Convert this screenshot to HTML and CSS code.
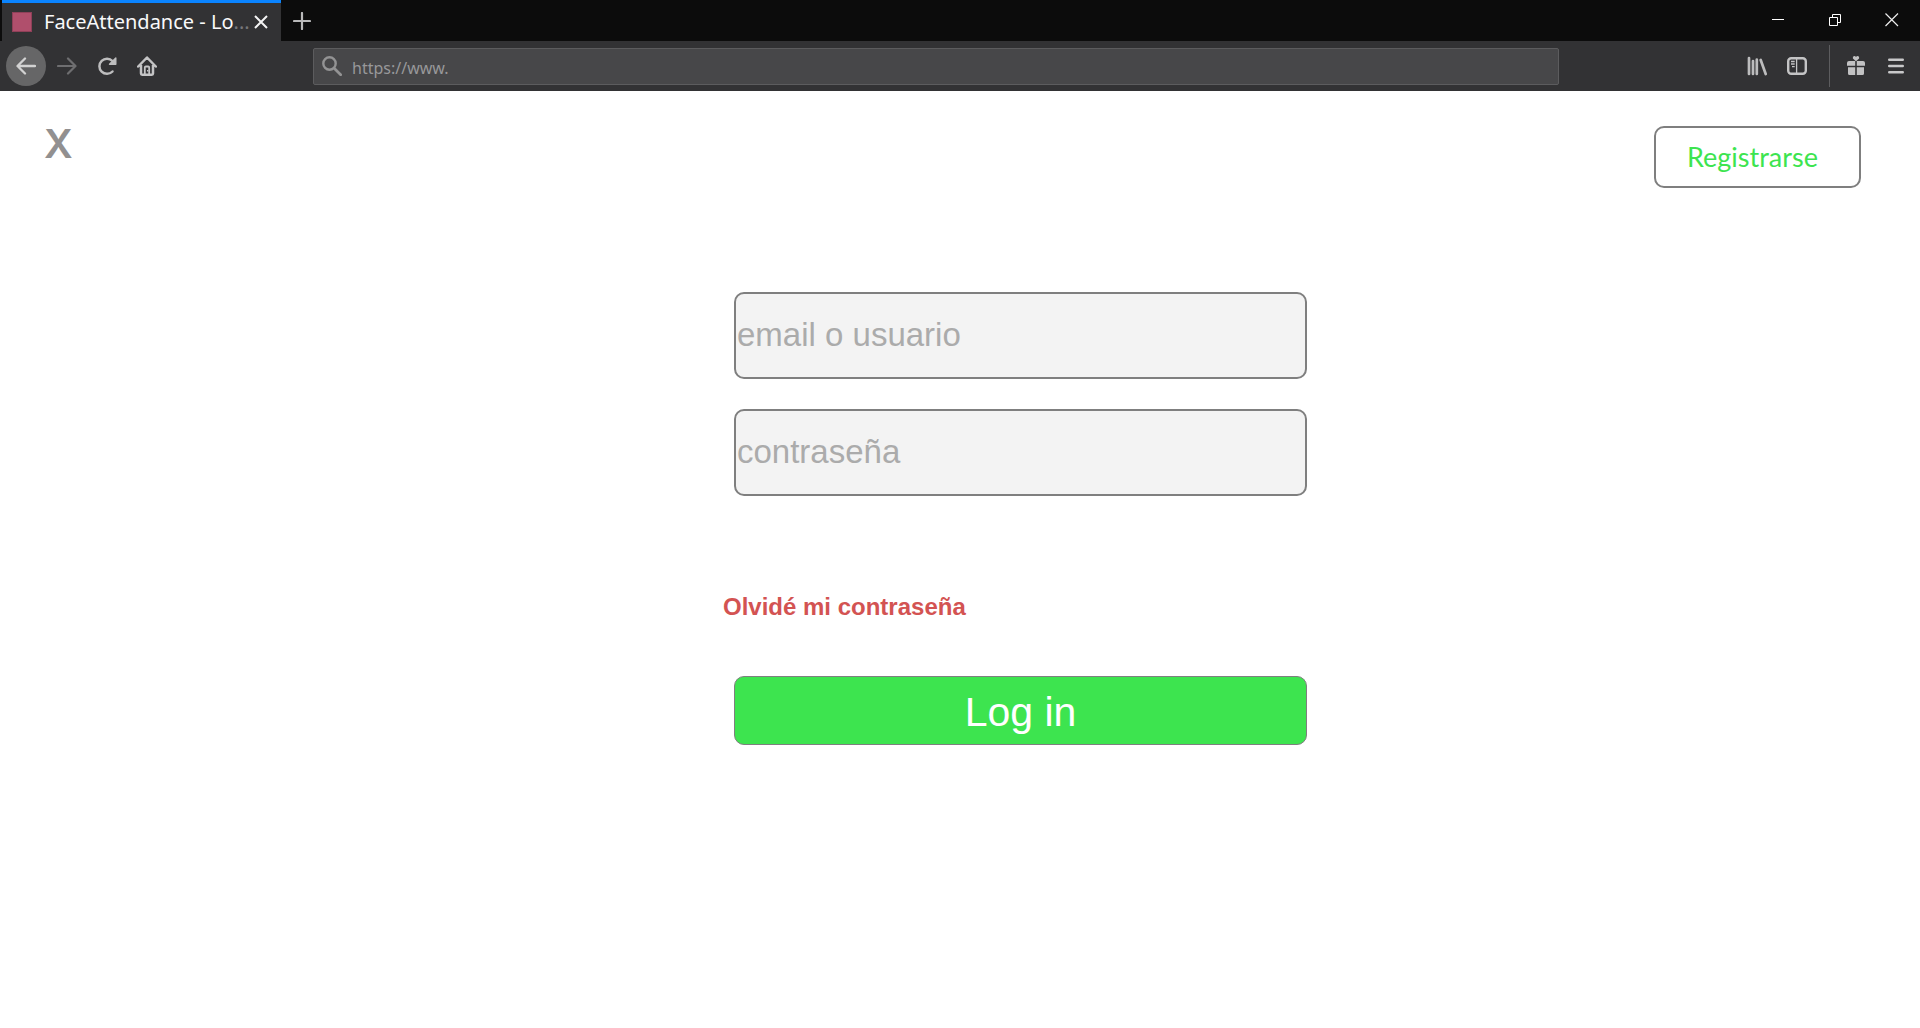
FILE: index.html
```html
<!DOCTYPE html>
<html lang="es">
<head>
<meta charset="utf-8">
<meta name="viewport" content="width=device-width, initial-scale=1">
<title>FaceAttendance - Log in</title>
<link rel="stylesheet" href="styles.css">
</head>
<body>
<header class="browser">
  <div class="tab-bar">
    <div class="tab">
      <span class="favicon"></span>
      <span class="tab-title">FaceAttendance - Lo<span class="fade">...</span></span>
      <button class="icon-btn" aria-label="Cerrar pestaña">
        <svg width="14" height="14" viewBox="0 0 14 14"><path d="M1 1l12 12M13 1L1 13" stroke="#f4f4f4" stroke-width="2" fill="none"/></svg>
      </button>
    </div>
    <button class="icon-btn new-tab" aria-label="Nueva pestaña">
      <svg width="18" height="18" viewBox="0 0 18 18"><path d="M9 1v16M1 9h16" stroke="#b9b9ba" stroke-width="2.2" stroke-linecap="round" fill="none"/></svg>
    </button>
    <div class="window-controls">
      <button class="icon-btn" aria-label="Minimizar"><svg width="14" height="14" viewBox="0 0 14 14"><path d="M1 6.5h12" stroke="#fff" fill="none"/></svg></button>
      <button class="icon-btn" aria-label="Restaurar"><svg width="14" height="14" viewBox="0 0 14 14"><path d="M1.500 4.500h8v8h-8zM4.500 4.500v-3h8v8h-3" stroke="#fff" fill="none"/></svg></button>
      <button class="icon-btn" aria-label="Cerrar"><svg width="14" height="14" viewBox="0 0 14 14"><path d="M.5 .5l12.500 12.500M13 .5L.5 13" stroke="#eee" stroke-width="1.200" fill="none"/></svg></button>
    </div>
  </div>
  <div class="toolbar">
    <nav class="nav-buttons">
      <button class="icon-btn back" aria-label="Atrás"><svg width="20" height="18" viewBox="0 0 20 18"><path d="M19 9H2M9 1.500L1.500 9 9 16.500" stroke="#d2d2d2" stroke-width="2.300" stroke-linecap="round" stroke-linejoin="round" fill="none"/></svg></button>
      <button class="icon-btn forward" aria-label="Adelante"><svg width="20" height="18" viewBox="0 0 20 18"><path d="M1 9h17M11 1.500L18.500 9 11 16.500" stroke="#6e6e70" stroke-width="2.200" stroke-linecap="round" stroke-linejoin="round" fill="none"/></svg></button>
      <button class="icon-btn" aria-label="Recargar"><svg width="20" height="20" viewBox="0 0 20 20"><path d="M15.500 15.500A7.600 7.600 0 1 1 15.500 5" stroke="#bdbdbe" stroke-width="2.500" stroke-linecap="round" fill="none"/><path d="M18.800 2v6.300h-6.300z" fill="#bdbdbe" stroke="#bdbdbe" stroke-width="1.400" stroke-linejoin="round"/></svg></button>
      <button class="icon-btn" aria-label="Inicio"><svg width="20" height="20" viewBox="0 0 20 20"><path d="M1.200 10.500L10 1.500l8.800 9M4 9v8.500q0 1.200 1.200 1.200h9.600q1.200 0 1.200-1.200V9" stroke="#c4c4c5" stroke-width="2.500" stroke-linecap="round" stroke-linejoin="round" fill="none"/><path d="M7.800 18.500V11.500q0-1 1-1h2.400q1 0 1 1v7" fill="none" stroke="#c4c4c5" stroke-width="1.800"/><path d="M10 14h1.400v1.600H10z" fill="#c4c4c5"/></svg></button>
    </nav>
    <label class="url-box">
      <svg width="20" height="20" viewBox="0 0 20 20"><circle cx="7.500" cy="7.500" r="6.200" stroke="#939394" stroke-width="2.400" fill="none"/><path d="M12.200 12.200l6.500 6.500" stroke="#939394" stroke-width="2.700" stroke-linecap="round"/></svg>
      <input class="url-input" type="text" value="https://www." aria-label="Dirección">
    </label>
    <div class="tools">
      <button class="icon-btn" aria-label="Biblioteca"><svg width="20" height="20" viewBox="0 0 20 20"><path d="M2 2v16M6 5v13M9.800 3.500V18M13.700 4l5 14" stroke="#bcbcbd" stroke-width="2.700" stroke-linecap="round" fill="none"/></svg></button>
      <button class="icon-btn" aria-label="Barra lateral"><svg width="20" height="20" viewBox="0 0 20 20"><rect x="1.200" y="2.200" width="17.600" height="15.600" rx="3" stroke="#c4c4c5" stroke-width="2.400" fill="none"/><path d="M9.600 2v16" stroke="#c4c4c5" stroke-width="1.300"/><path d="M4 5.500h3.700M4 8h3.700M5 10.700h2.700" stroke="#c4c4c5" stroke-width="1.300"/></svg></button>
      <span class="separator"></span>
      <button class="icon-btn" aria-label="Novedades"><svg width="20" height="20" viewBox="0 0 20 20"><path d="M3 5h6.200v4.700H1V7q0-2 2-2zM10.800 5H17q2 0 2 2v2.700h-8.200zM2 11.200h7.200V19H3.500Q2 19 2 17.500zM10.800 11.200H18v6.300q0 1.500-1.500 1.500h-5.700z" fill="#c2c2c3"/><path d="M10 5.200L6.900 2.400Q6.300.2 8.300 0 9.500 0 10 1.100 10.500 0 11.700 0 13.700.2 13.100 2.400z" fill="#c2c2c3"/></svg></button>
      <button class="icon-btn menu" aria-label="Menú"><svg width="16" height="16" viewBox="0 0 16 16"><path d="M1.200 1.800h13.600M1.200 8h13.600M1.200 14.200h13.600" stroke="#c8c8c9" stroke-width="2.400" stroke-linecap="round"/></svg></button>
    </div>
  </div>
</header>
<main>
  <div class="top-row">
    <button class="close-page">X</button>
    <button class="register">Registrarse</button>
  </div>
  <form class="login">
    <input class="field" type="text" placeholder="email o usuario" aria-label="email o usuario">
    <input class="field" type="password" placeholder="contraseña" aria-label="contraseña">
    <a class="forgot" href="#">Olvidé mi contraseña</a>
    <button class="submit" type="button">Log in</button>
  </form>
</main>
</body>
</html>
```
FILE: styles.css
```css
* {
  box-sizing: border-box;
}

body {
  margin: 0;
  background: #fff;
  font-family: "Liberation Sans", Arial, sans-serif;
}

button {
  font-family: inherit;
  cursor: pointer;
}

svg {
  display: block;
  flex: none;
}

.icon-btn {
  display: flex;
  align-items: center;
  justify-content: center;
  padding: 0;
  border: 0;
  background: none;
}

/* Browser chrome */
.tab-bar {
  display: flex;
  align-items: stretch;
  height: 41px;
  padding-left: 2px;
  background: #0c0c0c;
}

.tab {
  display: flex;
  align-items: center;
  width: 279px;
  padding: 0 13px 0 10px;
  border-top: 3px solid #0a84ff;
  background: #323234;
}

.favicon {
  width: 20px;
  height: 20px;
  margin-right: 12px;
  border: 1px solid #8f4058;
  background: #b04f6c;
}

.tab-title {
  flex: 1;
  min-width: 0;
  color: #f9f9fa;
  font: 20px/28px "Noto Sans", sans-serif;
  white-space: nowrap;
}

.fade {
  color: #77777a;
}

.new-tab {
  width: 42px;
}

.window-controls {
  display: flex;
  gap: 43px;
  margin-left: auto;
  padding: 0 21px 1px 0;
}

.toolbar {
  display: flex;
  align-items: center;
  height: 50px;
  background: #323234;
}

.nav-buttons {
  display: flex;
  align-items: center;
  gap: 20px;
  width: 313px;
  padding-left: 6px;
}

.back {
  width: 40px;
  height: 40px;
  margin-right: -9px;
  border-radius: 50%;
  background: #666667;
}

.url-box {
  display: flex;
  flex: 1;
  align-items: center;
  gap: 10px;
  height: 37px;
  padding: 0 8px;
  border: 1px solid #5c5c5e;
  border-radius: 2px;
  background: #474749;
}

.url-input {
  flex: 1;
  min-width: 0;
  padding: 4px 0 0;
  border: 0;
  outline: 0;
  background: none;
  color: #98989a;
  font: 16px/24px "Noto Sans", sans-serif;
}

.tools {
  display: flex;
  align-items: center;
  justify-content: flex-end;
  gap: 20px;
  width: 361px;
  padding-right: 16px;
}

.separator {
  width: 1px;
  height: 42px;
  margin: 0 -4px 0 2px;
  background: #5d5d5f;
}

.menu {
  margin-left: 2px;
}

/* Login page */
.top-row {
  display: flex;
  align-items: flex-start;
  justify-content: space-between;
  padding: 35px 59px 0 44px;
}

.close-page {
  padding: 0;
  border: 0;
  background: none;
  color: #929090;
  font: 600 40px/36px Inter, sans-serif;
}

.register {
  width: 207px;
  height: 62px;
  padding: 0 10px 0 0;
  border: 2px solid #7f7f7f;
  border-radius: 10px;
  background: #fff;
  color: #3de44f;
  font: 27px/32px Lato, sans-serif;
}

.login {
  display: flex;
  flex-direction: column;
  width: 573px;
  margin: 104px 0 0 calc(50% - 226px);
}

.field {
  height: 87px;
  margin-bottom: 30px;
  padding: 0 1px 2px;
  border: 2px solid #7f7f7f;
  border-radius: 10px;
  background: #f3f3f3;
  color: #555;
  font: 33px/40px "Liberation Sans", Arial, sans-serif;
}

.field::placeholder {
  color: #ababab;
  opacity: 1;
}

.forgot {
  align-self: flex-start;
  margin: 67px 0 55px -11px;
  color: #d35352;
  font-size: 24px;
  font-weight: bold;
  line-height: 28px;
  text-decoration: none;
}

.submit {
  height: 69px;
  padding: 2px 0 0;
  border: 1px solid #7f7f7f;
  border-radius: 10px;
  background: #3de44f;
  color: #fff;
  font-size: 41px;
  line-height: 48px;
}
```
